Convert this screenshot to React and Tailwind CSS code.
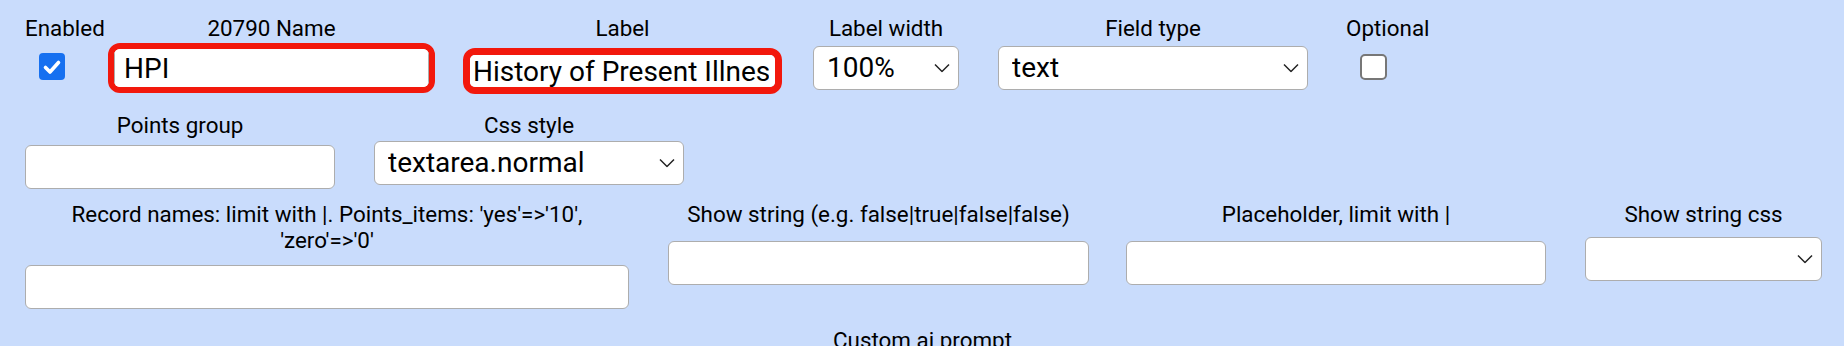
import React from "react";

const labelCls = "text-[22.4px] leading-[26px] text-center text-black whitespace-nowrap";
const boxCls =
  "block w-full h-[44px] bg-white border-[1.5px] border-[#adadad] rounded-[6px] text-[28px] text-black outline-none";

function Chevron() {
  return (
    <svg
      className="absolute right-[9px] top-1/2 -translate-y-1/2 pointer-events-none"
      width="16"
      height="9"
      viewBox="0 0 16 9"
      fill="none"
    >
      <path d="M1 1 L8 8 L15 1" stroke="#222" strokeWidth="1.5" />
    </svg>
  );
}

function Select({ value, className = "" }) {
  return (
    <div className={"relative " + className}>
      <select
        defaultValue={value}
        className={boxCls + " appearance-none pl-[13px] pr-[30px] leading-[40px]"}
      >
        <option value={value}>{value}</option>
      </select>
      <Chevron />
    </div>
  );
}

function TextInput({ className = "" }) {
  return <input type="text" className={boxCls + " px-[10px] " + className} />;
}

function CheckedBox() {
  return (
    <div className="w-[26px] h-[27px] rounded-[4px] bg-[#1670f0] flex items-center justify-center">
      <svg width="26" height="26" viewBox="0 0 26 26" fill="none">
        <path
          d="M6.5 13.5 L11 18 L19.5 8.5"
          stroke="#fff"
          strokeWidth="3.6"
          strokeLinecap="round"
          strokeLinejoin="round"
        />
      </svg>
    </div>
  );
}

function EmptyBox() {
  return <div className="w-[27px] h-[26px] rounded-[5px] bg-white border-2 border-[#777]" />;
}

export default function App() {
  return (
    <div className="h-[346px] w-full overflow-hidden bg-[#c9dcfc] font-['Roboto','Liberation_Sans',sans-serif] text-black">
      {/* row 1 */}
      <div className="flex items-start pl-[25px] pt-[15px]">
        <div className="w-[78px] shrink-0">
          <div className={labelCls}>Enabled</div>
          <div className="mt-[12px] ml-[14px]">
            <CheckedBox />
          </div>
        </div>
        <div className="ml-[5px] w-[327px] shrink-0">
          <div className={labelCls}>20790 Name</div>
          <div className="mt-[2px] h-[50px] border-[6px] border-[#f2180c] rounded-[12px] bg-white overflow-hidden">
            <input
              type="text"
              defaultValue="HPI"
              className="w-full h-full bg-white border-x-[1.5px] border-[#adadad] rounded-[4px] pl-[9px] text-[28px] outline-none"
            />
          </div>
        </div>
        <div className="ml-[28px] w-[319px] shrink-0">
          <div className={labelCls}>Label</div>
          <div className="mt-[7px] h-[46px] border-[7px] border-[#f2180c] rounded-[12px] bg-white overflow-hidden">
            <input
              type="text"
              defaultValue="History of Present Illness"
              className="w-full h-full bg-white pl-[3px] pr-[6px] text-[28px] outline-none"
            />
          </div>
        </div>
        <div className="ml-[31px] w-[146px] shrink-0">
          <div className={labelCls}>Label width</div>
          <Select value="100%" className="mt-[5px]" />
        </div>
        <div className="ml-[39px] w-[310px] shrink-0">
          <div className={labelCls}>Field type</div>
          <Select value="text" className="mt-[5px]" />
        </div>
        <div className="ml-[38px] w-[82px] shrink-0">
          <div className={labelCls}>Optional</div>
          <div className="mt-[13px] ml-[14px]">
            <EmptyBox />
          </div>
        </div>
      </div>

      {/* row 2 */}
      <div className="flex items-start pl-[25px] mt-[18px]">
        <div className="w-[310px] shrink-0">
          <div className={labelCls}>Points group</div>
          <TextInput className="mt-[7px]" />
        </div>
        <div className="ml-[39px] w-[310px] shrink-0">
          <div className={labelCls}>Css style</div>
          <Select value="textarea.normal" className="mt-[3px]" />
        </div>
      </div>

      {/* row 3 */}
      <div className="flex items-start pl-[25px] mt-[12px]">
        <div className="w-[604px] shrink-0">
          <div className={labelCls}>
            Record names: limit with |. Points_items: 'yes'=&gt;'10',
            <br />
            'zero'=&gt;'0'
          </div>
          <TextInput className="mt-[12px]" />
        </div>
        <div className="ml-[39px] w-[421px] shrink-0">
          <div className={labelCls}>Show string (e.g. false|true|false|false)</div>
          <TextInput className="mt-[14px]" />
        </div>
        <div className="ml-[37px] w-[420px] shrink-0">
          <div className={labelCls}>Placeholder, limit with |</div>
          <TextInput className="mt-[14px]" />
        </div>
        <div className="ml-[39px] w-[237px] shrink-0">
          <div className={labelCls}>Show string css</div>
          <Select value="" className="mt-[10px]" />
        </div>
      </div>

      {/* row 4 */}
      <div className="pl-[25px] mt-[18px]">
        <div className={labelCls + " w-[1795px]"}>Custom ai prompt</div>
      </div>
    </div>
  );
}
